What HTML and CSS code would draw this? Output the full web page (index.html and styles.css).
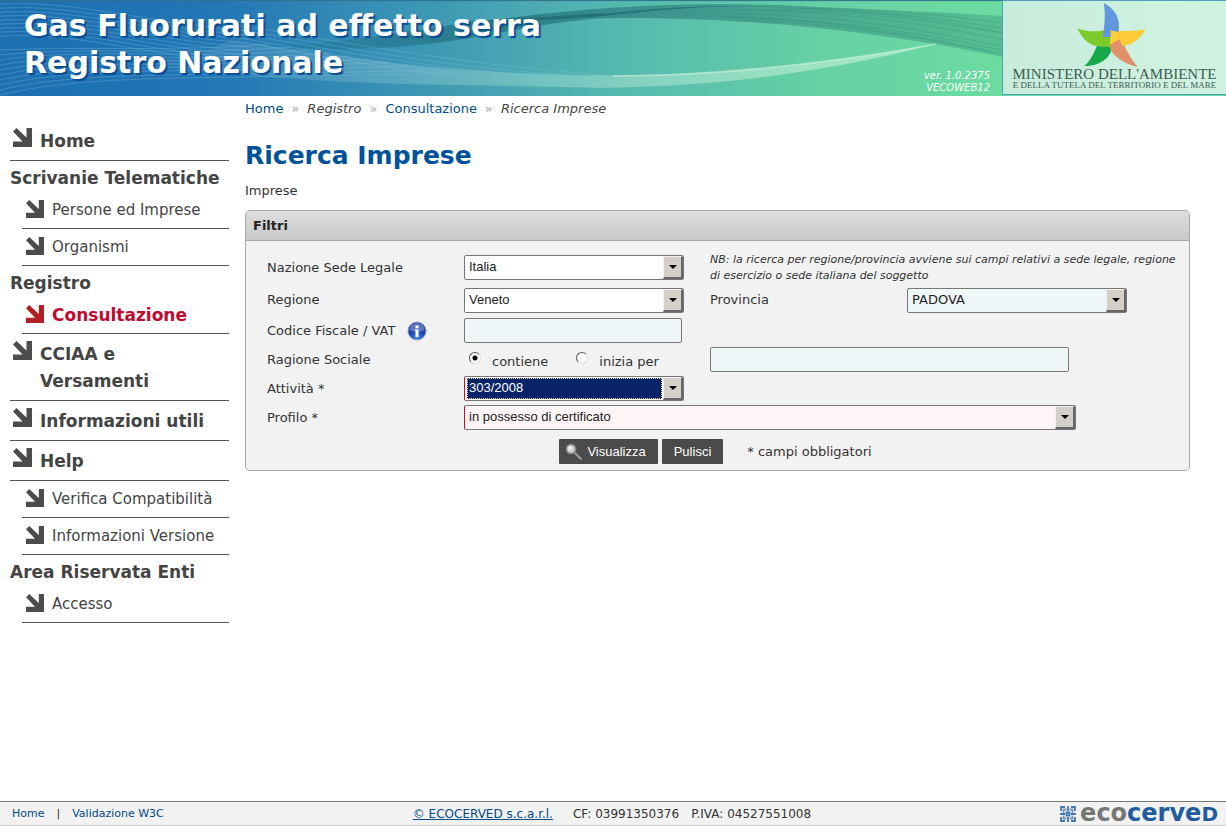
FILE: index.html
```html
<!DOCTYPE html>
<html lang="it">
<head>
<meta charset="utf-8">
<meta name="viewport" content="width=device-width, initial-scale=1">
<title>Ricerca Imprese - Registro Nazionale Gas Fluorurati</title>
<link rel="stylesheet" href="styles.css">
</head>
<body>
<svg class="sprite" aria-hidden="true">
  <symbol id="arrow" viewBox="0 0 19 19"><path d="M0 3.500 3.500 0 13.500 9.500V0H19v19H0v-5.500h9.500z"/></symbol>
  <symbol id="caret" viewBox="0 0 8 4"><path d="M0 0h8L4 4z"/></symbol>
</svg>

<header class="banner">
  <svg class="banner-art" viewBox="0 0 1226 96" preserveAspectRatio="none" aria-hidden="true">
    <defs>
      <linearGradient id="shade" x1="0" x2="1"><stop offset="0" stop-color="#17606e" stop-opacity=".1"/><stop offset=".3" stop-color="#17606e" stop-opacity=".6"/><stop offset="1" stop-color="#3c9a80" stop-opacity=".45"/></linearGradient>
      <linearGradient id="glow" x1="0" x2="1"><stop offset="0" stop-color="#fff" stop-opacity="0"/><stop offset=".5" stop-color="#c5f2d8" stop-opacity=".3"/><stop offset="1" stop-color="#c5f2d8" stop-opacity=".7"/></linearGradient>
      <path id="ripple" d="M-10 0C70-8 150 20 250 26"/>
      <path id="mesh" d="M700 12C850 16 900 26 1010 48"/>
    </defs>
    <path fill="url(#shade)" d="M262 45C340 47 400 30 500 19 600 6 700 1 800 6S960 13 1002 16V57C900 36 780 18 620 18 520 18 440 62 262 45z"/>
    <path fill="#14586a" opacity=".5" d="M450 21C520 20 560 15 613 13 680 5 730 6 760 6 700 6 660 10 613 15 560 20 500 23 450 21z"/>
    <path fill="url(#glow)" d="M230 40C360 60 440 70 540 74S760 74 936 44C780 84 650 90 560 87S320 88 120 62C170 61 200 56 230 40z"/>
    <g fill="none" stroke="#7fc4dd" stroke-opacity=".32" stroke-width="1">
      <use href="#ripple" y="5"/><use href="#ripple" y="9"/><use href="#ripple" y="13"/><use href="#ripple" y="17"/><use href="#ripple" y="21"/><use href="#ripple" y="25"/><use href="#ripple" y="29"/><use href="#ripple" y="33"/><use href="#ripple" y="37"/>
      <path d="M0 50C90 46 180 52 270 44M0 55C90 46 180 56 290 47M0 60C90 47 190 60 310 50M0 65C90 49 190 64 330 53M0 70C90 53 190 66 350 56M0 75C90 57 190 69 370 59M0 80C90 61 190 72 390 62M0 85C90 65 190 74 410 66M0 90C90 69 190 78 430 70M0 95C90 73 200 80 450 73"/>
      <path d="M240 26C340 40 420 60 613 76M240 30C340 45 420 66 613 79M240 34C340 50 420 70 613 82M240 38C340 55 420 75 613 85M250 43C340 60 440 80 613 88"/>
    </g>
    <g fill="none" stroke="#2f8875" stroke-opacity=".3" stroke-width="1">
      <use href="#mesh"/><use href="#mesh" x="20" y="-3"/><use href="#mesh" x="-20" y="3"/><use href="#mesh" x="40" y="-6"/><path d="M760 10C860 10 920 20 1002 33M780 9C860 8 920 16 1002 28M800 8C860 8 920 12 1002 23M720 17C850 20 910 32 1002 50M740 20C850 24 910 36 1002 54"/>
    </g>
    <path fill="none" stroke="#c4eed9" stroke-opacity=".6" stroke-width="1.500" d="M613 76C720 76 830 64 936 44"/>
  </svg>
  <h1 class="site-title">Gas Fluorurati ad effetto serra<br>Registro Nazionale</h1>
  <p class="version">ver. 1.0.2375<br>VECOWEB12</p>
  <div class="ministry">
    <svg class="star" viewBox="0 0 70 66" aria-hidden="true">
      <path fill="#16a94a" d="M21 42h15C36 54 26 65 7 65 14 59 17 51 21 42z"/>
      <path fill="#df9269" d="M32 43 45 33C47 44 54 56 62 66 46 62 35 54 32 43z"/>
      <path fill="#7acb2b" d="M0 26C11 31 23 29 34 27V45H26C13 45 5 38 0 26z"/>
      <path fill="#fccb38" d="M34 27C46 30 58 29 70 27 64 38 55 44 46 44L43 37 34 43z"/>
      <path fill="#6296dd" d="M27 0C39 6 45 17 42 30L34 28V35H26C28 22 29 12 27 0z"/>
    </svg>
    <span class="ministry-name">MINISTERO DELL'AMBIENTE</span>
    <span class="ministry-sub">E DELLA TUTELA DEL TERRITORIO E DEL MARE</span>
  </div>
</header>

<div class="page">
  <nav class="menu" aria-label="Menu principale">
    <a class="item" href="#"><svg class="ico"><use href="#arrow"/></svg><span>Home</span></a>
    <h2 class="group">Scrivanie Telematiche</h2>
    <a class="item sub" href="#"><svg class="ico"><use href="#arrow"/></svg><span>Persone ed Imprese</span></a>
    <a class="item sub" href="#"><svg class="ico"><use href="#arrow"/></svg><span>Organismi</span></a>
    <h2 class="group">Registro</h2>
    <a class="item sub current" href="#" aria-current="page"><svg class="ico"><use href="#arrow"/></svg><span>Consultazione</span></a>
    <a class="item" href="#"><svg class="ico"><use href="#arrow"/></svg><span>CCIAA e<br>Versamenti</span></a>
    <a class="item" href="#"><svg class="ico"><use href="#arrow"/></svg><span>Informazioni utili</span></a>
    <a class="item" href="#"><svg class="ico"><use href="#arrow"/></svg><span>Help</span></a>
    <a class="item sub" href="#"><svg class="ico"><use href="#arrow"/></svg><span>Verifica Compatibilità</span></a>
    <a class="item sub" href="#"><svg class="ico"><use href="#arrow"/></svg><span>Informazioni Versione</span></a>
    <h2 class="group">Area Riservata Enti</h2>
    <a class="item sub" href="#"><svg class="ico"><use href="#arrow"/></svg><span>Accesso</span></a>
  </nav>

  <main class="content">
    <nav class="crumbs" aria-label="Percorso">
      <a href="#">Home</a><b>»</b><i>Registro</i><b>»</b><a href="#">Consultazione</a><b>»</b><i>Ricerca Imprese</i>
    </nav>
    <h2 class="page-title">Ricerca Imprese</h2>
    <p class="lead">Imprese</p>

    <form class="panel">
      <h3 class="panel-head">Filtri</h3>
      <div class="fields">
        <label for="nazione">Nazione Sede Legale</label>
        <div class="select"><select id="nazione"><option>Italia</option></select><span class="drop"><svg><use href="#caret"/></svg></span></div>
        <p class="note">NB: la ricerca per regione/provincia avviene sui campi relativi a sede legale, regione di esercizio o sede italiana del soggetto</p>

        <label for="regione">Regione</label>
        <div class="select"><select id="regione"><option>Veneto</option></select><span class="drop"><svg><use href="#caret"/></svg></span></div>
        <label for="provincia">Provincia</label>
        <div class="select tinted"><select id="provincia"><option>PADOVA</option></select><span class="drop"><svg><use href="#caret"/></svg></span></div>

        <label for="cf" class="with-info">Codice Fiscale / VAT
          <svg class="info" viewBox="0 0 20 20" aria-hidden="true">
            <defs><radialGradient id="ball" cx=".5" cy=".9" r=".9"><stop offset="0" stop-color="#3f86e8"/><stop offset=".5" stop-color="#1c46ab"/><stop offset="1" stop-color="#1b358f"/></radialGradient></defs>
            <circle cx="10" cy="10" r="9" fill="url(#ball)" stroke="#8398ca"/>
            <path fill="#a9bdea" opacity=".45" d="M2.500 9C3 4 6 2 10 2s7 2 7.500 7C13 11 7 11 2.500 9z"/>
            <path fill="#fff" d="M8.500 4.500h3v2.800h-3zM8 8.500h3.500V16h-3V9.800H8z"/>
          </svg>
        </label>
        <input class="text" id="cf" type="text">

        <span id="ragione-label" class="row-start">Ragione Sociale</span>
        <div class="radios" role="radiogroup" aria-labelledby="ragione-label">
          <label><input type="radio" name="modo" checked><span>contiene</span></label>
          <label><input type="radio" name="modo"><span>inizia per</span></label>
        </div>
        <input class="text wide" type="text" aria-labelledby="ragione-label">

        <label for="attivita" class="row-start">Attività *</label>
        <div class="select required focused"><select id="attivita"><option>303/2008</option></select><span class="drop"><svg><use href="#caret"/></svg></span></div>

        <label for="profilo" class="row-start">Profilo *</label>
        <div class="select required rosy"><select id="profilo"><option>in possesso di certificato</option></select><span class="drop"><svg><use href="#caret"/></svg></span></div>
      </div>
      <div class="actions">
        <button class="btn" type="submit">
          <svg class="lens" viewBox="0 0 18 18" aria-hidden="true"><path d="m9 9 7.500 7.500" stroke="#999" stroke-width="2.200"/><circle cx="6" cy="6" r="4.500" fill="#cfcfcf" stroke="#8b8b8b" stroke-width="1.500"/><circle cx="5" cy="5" r="2" fill="#eee"/></svg>Visualizza</button>
        <button class="btn" type="reset">Pulisci</button>
        <span class="hint">* campi obbligatori</span>
      </div>
    </form>
  </main>
</div>

<footer class="footer">
  <div class="foot-links"><a href="#">Home</a><span>|</span><a href="#">Validazione W3C</a></div>
  <div class="foot-info"><a href="#">© ECOCERVED s.c.a.r.l.</a><span class="cf">CF: 03991350376</span><span>P.IVA: 04527551008</span></div>
  <a class="brand" href="#">
    <svg class="brand-mark" viewBox="0 0 16 16" aria-hidden="true">
      <g fill="none" stroke-width="1.800"><path stroke="#3f78b5" d="M1 5V1h4M11 1h4v4M5 15H1v-4M15 11v4h-4"/><path stroke="#8193a5" d="M3.500 7.500V3.500h3M9.500 3.500h3v4M6.500 12.500h-3v-3M12.500 9.500v3h-3"/><path stroke="#3f78b5" d="M6.500 6.500h3v3h-3zM8 0v5M8 11v5M0 8h5M11 8h5"/></g>
    </svg>
    <span class="brand-name"><span class="eco">eco</span>cerve<span class="cap">d</span></span>
  </a>
</footer>
</body>
</html>
```
FILE: styles.css
```css
* { box-sizing: border-box; }

body {
  margin: 0;
  min-height: 100vh;
  display: flex;
  flex-direction: column;
  background: #fff;
  color: #333;
  font: 13px/16px "DejaVu Sans", Verdana, sans-serif;
}

h1, h2, h3, p { margin: 0; }
a { color: #004b87; text-decoration: none; }
.sprite { position: absolute; width: 0; height: 0; }

/* Banner */
.banner {
  position: relative;
  display: flex;
  min-height: 96px;
  background: linear-gradient(90deg, #1d6fb0 0%, #2377b5 18%, #3a94b5 33%, #55b8b0 50%, #66cfa5 66%, #6cdca2 82%, #6cdca2 100%);
  box-shadow: inset 0 1px 1px #2f6f8d;
}
.banner-art { position: absolute; inset: 0; width: 100%; height: 100%; }
.site-title {
  position: relative;
  padding: 7px 0 0 24px;
  color: #fff;
  font-size: 30px;
  line-height: 37px;
  text-shadow: 2px 2px 1px #0a4c93;
}
.version {
  position: relative;
  margin-left: auto;
  align-self: flex-end;
  padding: 0 12px 2px 0;
  color: #fff;
  font-size: 10px;
  line-height: 12px;
  font-style: italic;
  text-align: right;
}
.ministry {
  position: relative;
  width: 224px;
  margin-bottom: 1px;
  padding-top: 2px;
  display: flex;
  flex-direction: column;
  align-items: center;
  border: 1px solid #4f9fbb;
  border-right: 0;
  background: linear-gradient(90deg, #c8ecdc, #d0f3e1);
  color: #405c50;
  font-family: "Liberation Serif", serif;
  white-space: nowrap;
}
.star { width: 69px; height: 64px; margin-right: 6px; }
.ministry-name { font-size: 15px; line-height: 14px; }
.ministry-sub { font-size: 9px; line-height: 9px; }

/* Page frame */
.page {
  flex: 1;
  display: flex;
  align-items: flex-start;
  gap: 16px;
  padding: 0 36px 24px 10px;
}

/* Side menu */
.menu { flex: 0 0 219px; padding-top: 25px; }
.item {
  display: flex;
  gap: 8px;
  padding: 7px 0 5px 3px;
  border-bottom: 1px solid #555;
  color: #444;
  font-size: 17px;
  font-weight: bold;
  line-height: 27px;
}
.ico { flex: none; width: 19px; height: 19px; fill: #4c4c4c; }
.group { color: #444; font-size: 17px; line-height: 27px; padding-top: 4px; }
.sub {
  margin-left: 12px;
  padding: 8px 0 8px 4px;
  font-size: 15px;
  font-weight: normal;
  line-height: 20px;
}
.sub .ico { width: 18px; height: 18px; }
.current { color: #bf0a30; font-size: 17px; font-weight: bold; }
.current .ico { fill: #b02024; }

/* Main column */
.content { flex: 1; min-width: 0; }
.crumbs { display: flex; gap: 8px; padding-top: 5px; }
.crumbs i { color: #444; }
.crumbs b { color: #aaa; font-weight: normal; }
.page-title { padding-top: 23px; color: #00529b; font-size: 25px; line-height: 32px; }
.lead { padding: 11px 0; }

/* Filter panel */
.panel { border: 1px solid #a8a8a8; border-radius: 5px; background: #f2f2f2; overflow: hidden; }
.panel-head {
  padding: 1px 7px 0;
  border-bottom: 1px solid #a8a8a8;
  background: linear-gradient(#dedede, #c8c8c8);
  color: #222;
  font-size: 13px;
  line-height: 28px;
}
.fields {
  display: grid;
  grid-template-columns: 197px 246px 197px 1fr;
  grid-template-rows: 33px 32px;
  grid-auto-rows: 29px;
  align-items: center;
  padding: 10px 2px 0 21px;
}
.row-start { grid-column: 1; }
.with-info { display: flex; align-items: center; gap: 12px; }
.info { width: 20px; height: 20px; }
.note { grid-column: 3 / -1; font-size: 11px; font-style: italic; }

.select {
  display: flex;
  width: 220px;
  height: 25px;
  border: 1px solid #777;
  border-radius: 2px;
  background: #fff;
}
.select select {
  flex: 1;
  min-width: 0;
  appearance: none;
  margin: 1px 0 1px 1px;
  padding: 0 0 1px 3px;
  border: 0;
  border-radius: 0;
  background: transparent;
  color: #222;
  font: 13px/16px "Liberation Sans", Arial, sans-serif;
}
.drop {
  display: grid;
  place-items: center;
  width: 20px;
  background: #d4d0c8;
  border: solid;
  border-width: 1px 2px 2px 1px;
  border-color: #f4f2ee #666 #666 #f4f2ee;
}
.drop svg { width: 8px; height: 4px; }
.tinted, .text { background: #f0f7f8; }
.tinted select { font-family: "DejaVu Sans", Verdana, sans-serif; }
.required { border-left-color: #c8102e; }
.focused select { margin: 1px 1px 1px 2px; padding: 0 0 1px 1px; border: 1px dotted #f5db95; background: #0a246a; color: #fff; outline: 0; }
.rosy { grid-column: 2 / -1; width: 612px; max-width: 100%; background: #fff4f6; }
.text {
  width: 218px;
  height: 25px;
  border: 1px solid #777;
  border-radius: 2px;
  padding: 0 4px;
  font: 13px/16px "Liberation Sans", Arial, sans-serif;
}
.wide { grid-column: 3 / -1; width: 359px; max-width: 100%; }

.radios { display: flex; gap: 28px; padding-left: 5px; }
.radios label { display: flex; gap: 11px; }
.radios span { padding-top: 4px; }
.radios input {
  appearance: none;
  width: 12px;
  height: 12px;
  margin: 2px 0 0;
  border: 1px solid;
  border-color: #555 #ddd #ddd #555;
  border-radius: 50%;
  background: #fff;
}
.radios input:checked { background: radial-gradient(circle, #000 0 2px, #fff 3px); }

.actions { display: flex; align-items: center; justify-content: center; gap: 4px; padding: 7px 4px 6px 0; }
.btn {
  display: flex;
  align-items: center;
  gap: 4px;
  height: 25px;
  padding: 0 12px;
  border: 0;
  border-radius: 1px;
  background: #4b4b4b;
  color: #fff;
  font: 13px/16px "Liberation Sans", Arial, sans-serif;
}
.btn:first-child { padding-left: 6px; }
.lens { width: 18px; height: 18px; }
.hint { margin-left: 20px; }

/* Footer */
.footer {
  display: flex;
  align-items: center;
  justify-content: space-between;
  height: 25px;
  padding: 0 8px 0 12px;
  border-top: 1px solid #777;
  border-bottom: 1px solid #d4d0c8;
  background: #f2f2f2;
  font-size: 11px;
}
.foot-links { display: flex; gap: 12px; }
.foot-info { display: flex; gap: 12px; font-size: 12px; }
.foot-info a { text-decoration: underline; }
.foot-info .cf { margin-left: 8px; }
.brand { display: flex; align-items: center; gap: 4px; color: #1f5c9e; }
.brand-mark { width: 16px; height: 16px; }
.brand-name { font-size: 24px; font-weight: bold; line-height: 22px; }
.brand .eco { color: #777; }
.brand .cap { font-size: 20px; text-transform: uppercase; }
```
